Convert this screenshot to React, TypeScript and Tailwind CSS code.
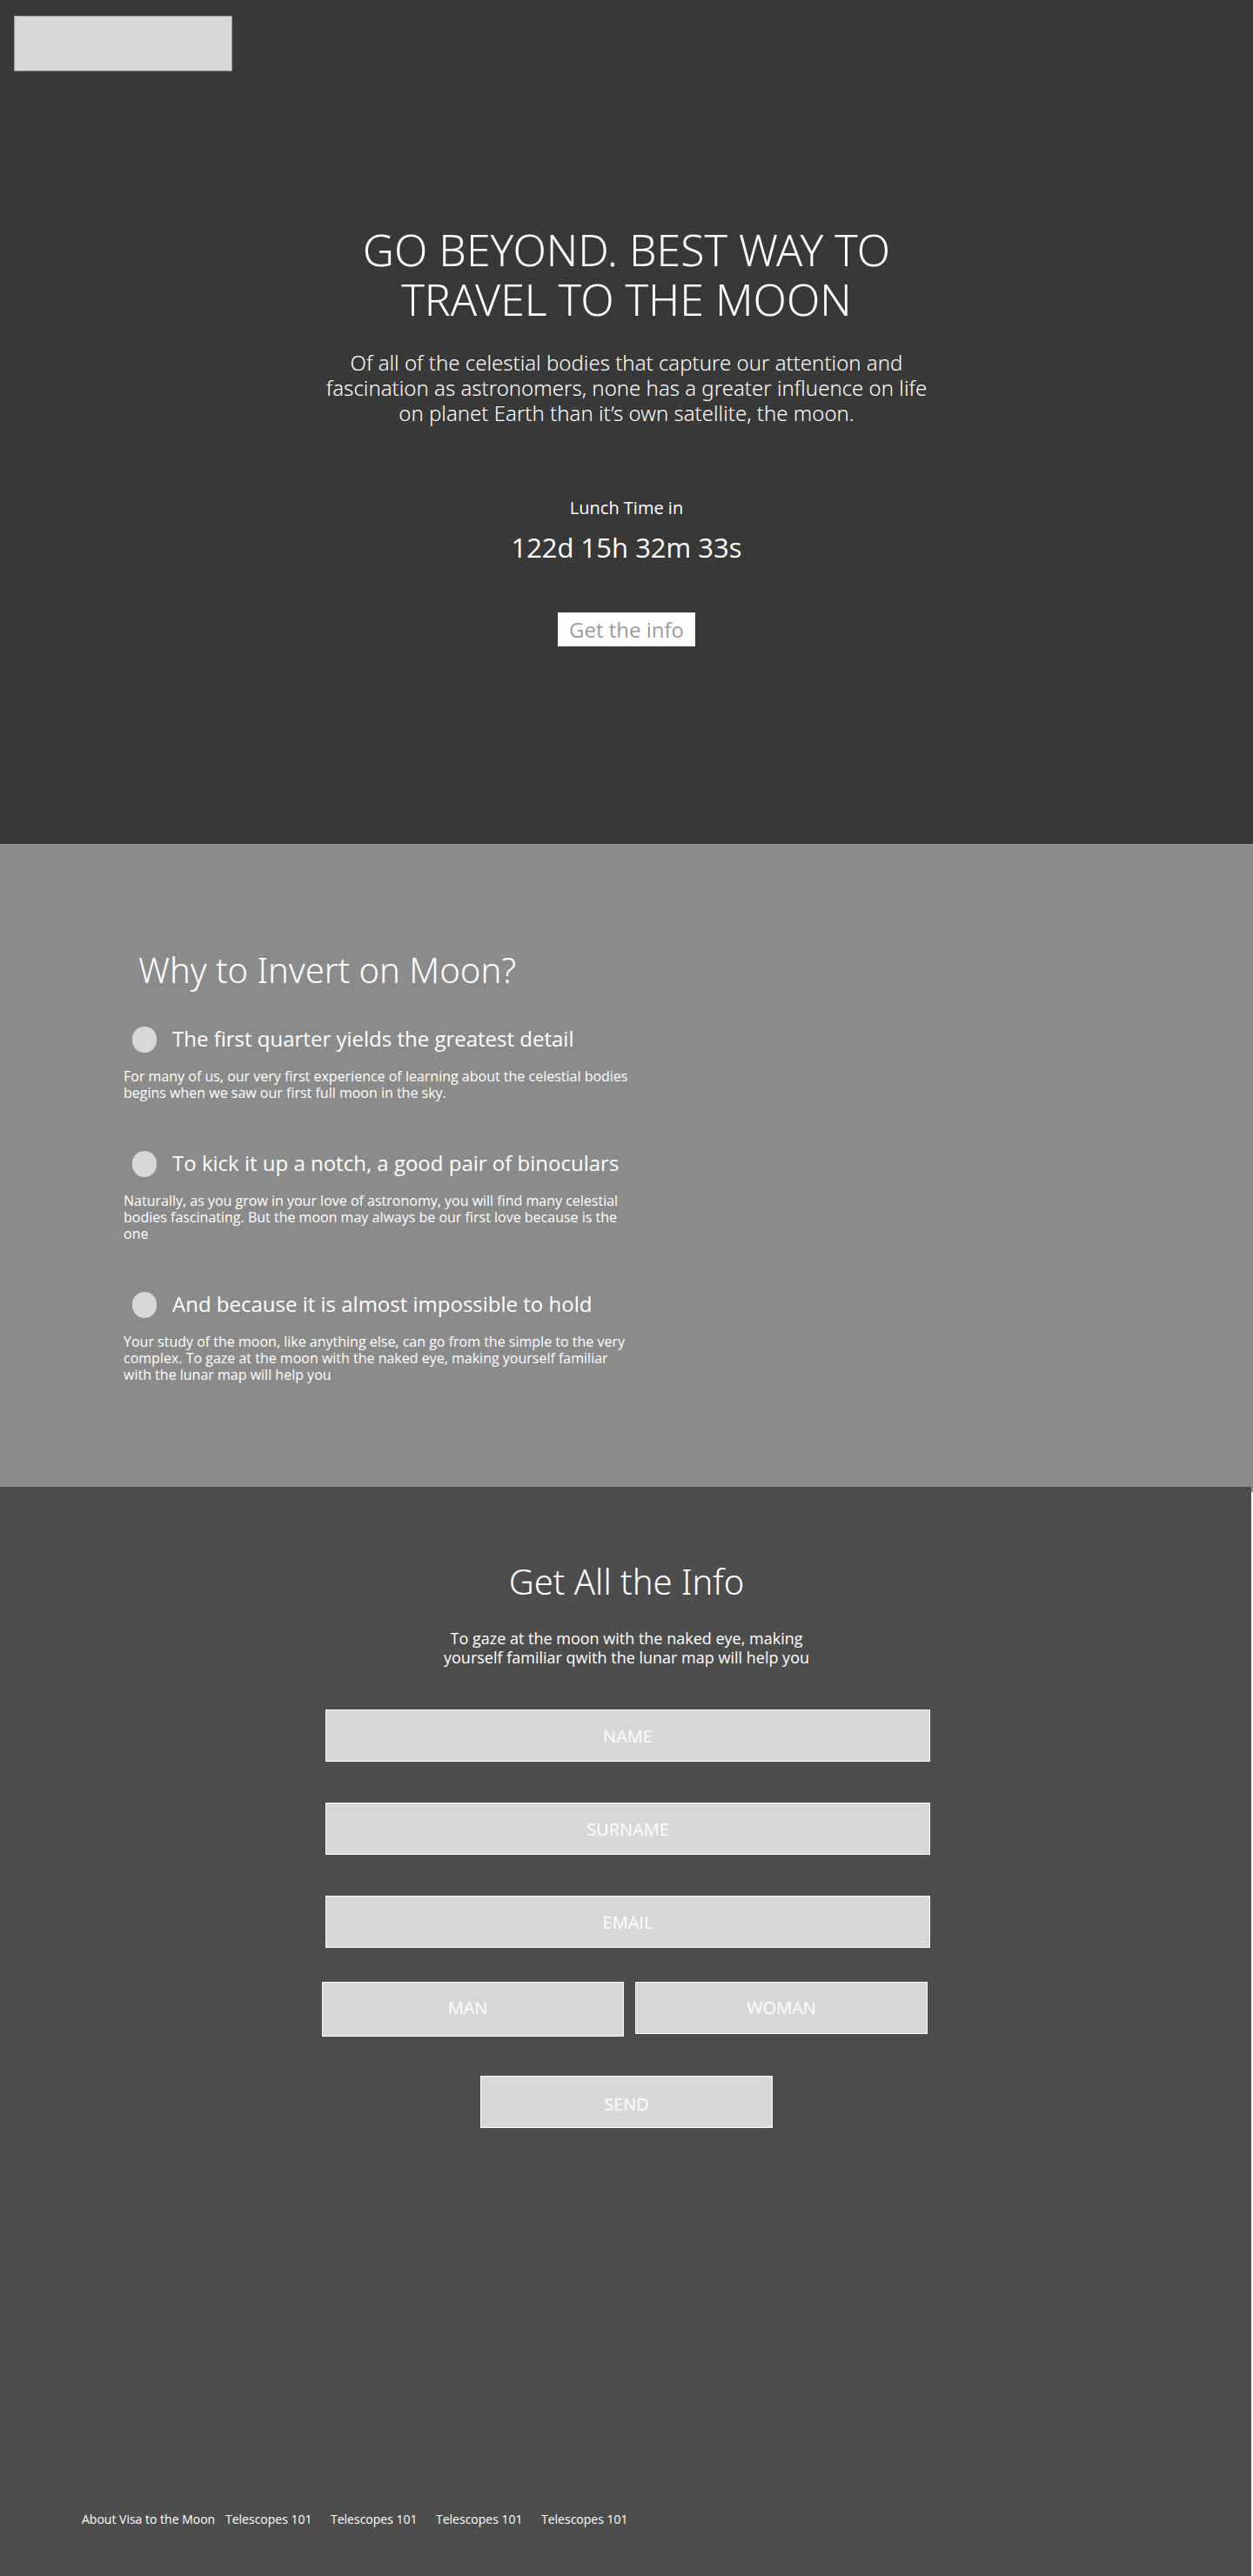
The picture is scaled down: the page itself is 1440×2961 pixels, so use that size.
const reasons = [
  {
    title: 'The first quarter yields the greatest detail',
    body: 'For many of us, our very first experience of learning about the celestial bodies begins when we saw our first full moon in the sky.',
  },
  {
    title: 'To kick it up a notch, a good pair of binoculars',
    body: 'Naturally, as you grow in your love of astronomy, you will find many celestial bodies fascinating. But the moon may always be our first love because is the one',
  },
  {
    title: 'And because it is almost impossible to hold',
    body: 'Your study of the moon, like anything else, can go from the simple to the very complex. To gaze at the moon with the naked eye, making yourself familiar with the lunar map will help you',
  },
];

const fields = [
  { name: 'name', label: 'NAME', type: 'text' },
  { name: 'surname', label: 'SURNAME', type: 'text' },
  { name: 'email', label: 'EMAIL', type: 'email' },
];

const footerLinks = ['Telescopes 101', 'Telescopes 101', 'Telescopes 101', 'Telescopes 101'];

function Hero() {
  return (
    <section className="bg-[#383838] pt-[18px] pb-[227px]">
      <header className="px-4">
        <a
          href="#"
          aria-label="Home"
          className="block h-16 w-[251px] border border-[#979797] bg-[#d8d8d8]"
        />
      </header>
      <div className="flex flex-col items-center pt-[177px] text-center">
        <h1 className="max-w-[640px] font-['Noto_Sans',sans-serif] text-[50px] leading-[57px] font-light">
          GO BEYOND. BEST WAY TO TRAVEL TO THE MOON
        </h1>
        <p className="mt-[29px] max-w-[700px] font-['Noto_Sans',sans-serif] text-2xl leading-[29px] font-light">
          Of all of the celestial bodies that capture our attention and fascination as astronomers,
          none has a greater influence on life on planet Earth than it’s own satellite, the moon.
        </p>
        <p className="mt-[83px] text-xl leading-6">Lunch Time in</p>
        <p className="mt-[14px] text-[31px] leading-[38px]">122d 15h 32m 33s</p>
        <button
          type="button"
          className="mt-14 flex h-[39px] w-[158px] items-center justify-center bg-white text-2xl leading-7 text-[#9b9b9b]"
        >
          Get the info
        </button>
      </div>
    </section>
  );
}

function Reasons() {
  return (
    <section className="bg-[#8b8b8b] px-[142px] pt-[121px] pb-[125px]">
      <h2 className="pl-[17px] font-['Noto_Sans',sans-serif] text-[40px] leading-[48px] font-light">
        Why to Invert on Moon?
      </h2>
      <ul className="mt-[41px] flex flex-col gap-[57px]">
        {reasons.map((reason) => (
          <li key={reason.title}>
            <div className="flex items-start gap-[18px] pl-[10px]">
              <span className="h-[30px] w-7 shrink-0 rounded-full bg-[#d8d8d8]" />
              <h3 className="text-2xl leading-7">{reason.title}</h3>
            </div>
            <p className="mt-[18px] max-w-[582px] text-base leading-[19px]">{reason.body}</p>
          </li>
        ))}
      </ul>
    </section>
  );
}

function InfoForm() {
  return (
    <form
      className="mt-[49px] flex w-full max-w-[700px] flex-col text-xl"
      onSubmit={(event) => event.preventDefault()}
    >
      <div className="flex flex-col gap-[47px] pr-px pl-1">
        {fields.map((field) => (
          <input
            key={field.name}
            name={field.name}
            type={field.type}
            aria-label={field.label}
            placeholder={field.label}
            className="h-[60px] w-full border border-white bg-[#d8d8d8] text-center text-white placeholder:text-white placeholder:opacity-100"
          />
        ))}
      </div>
      <div className="mt-[39px] grid grid-cols-[347fr_336fr] items-start gap-[13px] pr-1">
        <button
          type="button"
          className="h-[63px] border border-white bg-[#d8d8d8] pr-3 pb-1"
        >
          MAN
        </button>
        <button type="button" className="h-[60px] border border-white bg-[#d8d8d8]">
          WOMAN
        </button>
      </div>
      <button
        type="submit"
        className="mt-[45px] h-[60px] w-[336px] self-center border border-white bg-[#d8d8d8] pt-1.5"
      >
        SEND
      </button>
    </form>
  );
}

function Footer() {
  return (
    <footer className="mt-[440px] w-full pr-4 pb-[55px] pl-[92px]">
      <nav aria-label="Footer">
        <ul className="flex text-sm leading-5">
          <li className="w-[165px]">
            <a href="#">About Visa to the Moon</a>
          </li>
          {footerLinks.map((label, index) => (
            <li key={index} className="w-[121px]">
              <a href="#">{label}</a>
            </li>
          ))}
        </ul>
      </nav>
    </footer>
  );
}

export default function App() {
  return (
    <main className="bg-white font-['Open_Sans',sans-serif] text-white">
      <Hero />
      <Reasons />
      <section className="-mt-1.5 mr-0.5 flex flex-col items-center bg-[#4d4d4d] pt-[85px] pl-0.5">
        <h2 className="font-['Noto_Sans',sans-serif] text-[40px] leading-[48px] font-light">
          Get All the Info
        </h2>
        <p className="mt-[30px] max-w-[430px] text-center text-lg leading-[22px]">
          To gaze at the moon with the naked eye, making yourself familiar qwith the lunar map will
          help you
        </p>
        <InfoForm />
        <Footer />
      </section>
    </main>
  );
}
